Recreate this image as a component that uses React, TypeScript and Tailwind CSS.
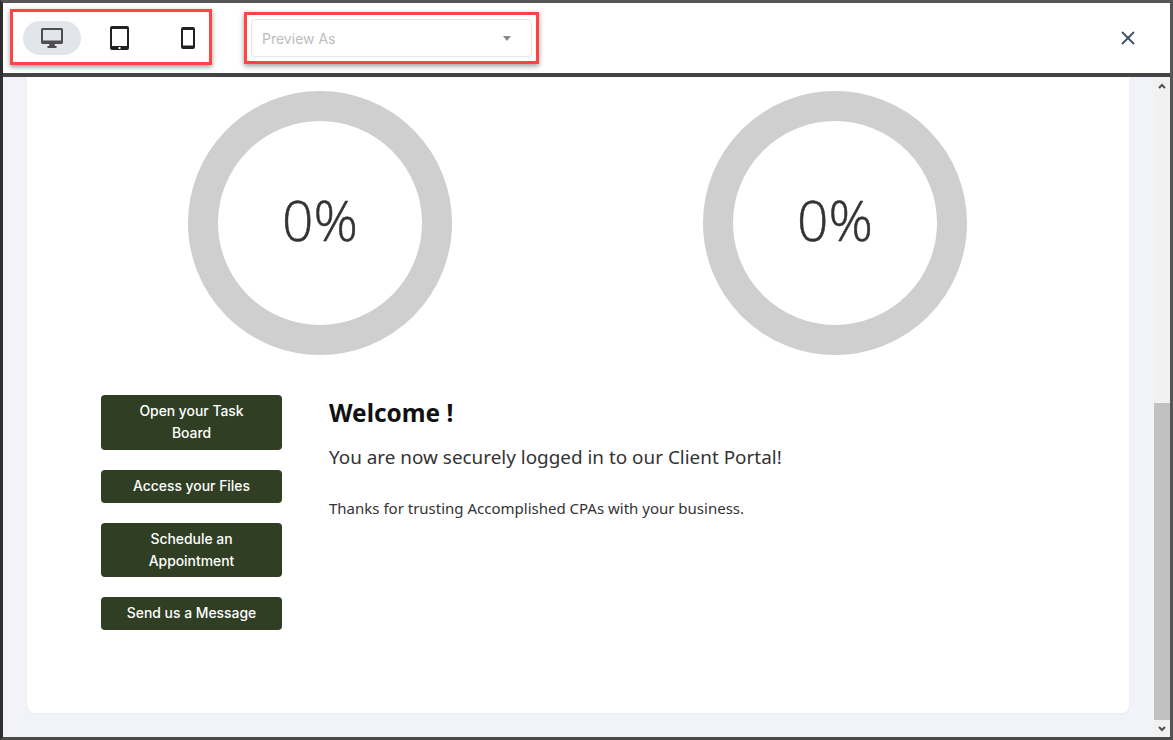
import { X } from 'lucide-react'

const BUTTONS = ['Open your Task Board', 'Access your Files', 'Schedule an Appointment', 'Send us a Message']

function Donut() {
  return (
    <div className="w-[264px] h-[264px] rounded-full border-[30px] border-[#cfcfcf] flex items-center justify-center">
      <span className="text-[55px] leading-none font-light [-webkit-text-stroke:0.5px_#333333] text-[#333333] font-['Open_Sans',sans-serif] -mt-[7px]">0%</span>
    </div>
  )
}

function DesktopIcon() {
  return (
    <svg width="22" height="20" viewBox="0 0 22 20" fill="#4f4f4f">
      <path fillRule="evenodd" d="M1.5 0h19A1.5 1.5 0 0 1 22 1.5v13a1.5 1.5 0 0 1-1.5 1.5h-19A1.5 1.5 0 0 1 0 14.500v-13A1.500 1.500 0 0 1 1.500 0zM2 2v10.500h18V2z" />
      <path d="M8.500 16h5l.5 2h1.500v2h-9v-2H8z" />
    </svg>
  )
}

function TabletIcon() {
  return (
    <svg width="19" height="24" viewBox="0 0 19 24" fill="#222222">
      <path fillRule="evenodd" d="M2 0h15a2 2 0 0 1 2 2v20a2 2 0 0 1-2 2H2a2 2 0 0 1-2-2V2a2 2 0 0 1 2-2zM2 3v17h15V3z" />
      <rect x="8.500" y="21" width="2" height="2" fill="#ffffff" />
    </svg>
  )
}

function PhoneIcon() {
  return (
    <svg width="14" height="22" viewBox="0 0 14 22" fill="#222222">
      <path fillRule="evenodd" d="M2 0h10a2 2 0 0 1 2 2v18a2 2 0 0 1-2 2H2a2 2 0 0 1-2-2V2a2 2 0 0 1 2-2zM2 3v15.500h10V3z" />
    </svg>
  )
}

export default function App() {
  return (
    <div className="w-[1173px] h-[740px] overflow-hidden flex flex-col bg-white border-[3px] border-[#555555] border-l-[#2e2e2e] border-b-[#4a4a4a] font-['Inter',sans-serif]">
      {/* Top bar */}
      <div className="h-[70px] shrink-0 flex items-start bg-white pl-[7px]">
        <div className="mt-[6px] w-[202px] h-[56px] border-[3px] border-[#ff4444] shadow-[0_2px_5px_rgba(0,0,0,0.4)] flex items-center pl-[10px] pt-[2px]">
          <div className="w-[58px] h-[34px] rounded-full bg-[#e2e5e9] flex items-center justify-center">
            <DesktopIcon />
          </div>
          <div className="w-[19px] ml-[29px] flex"><TabletIcon /></div>
          <div className="w-[14px] ml-[52px] flex"><PhoneIcon /></div>
        </div>
        <div className="ml-[32px] mt-[9px] w-[295px] h-[52px] border-[3px] border-[#ff4444] shadow-[0_2px_5px_rgba(0,0,0,0.4)] p-[4px]">
          <div className="h-full border border-[#e4e6ea] rounded-[4px] flex items-center justify-between pl-[10px] pr-[20px]">
            <span className="text-[14px] leading-[20px] pt-[2px] text-[#bdbdbd]">Preview As</span>
            <span className="w-0 h-0 border-x-[4px] border-x-transparent border-t-[5px] border-t-[#888888]" />
          </div>
        </div>
        <div className="ml-auto mr-[31px] mt-[24px] text-[#3f5168]">
          <X size={22} strokeWidth={2} />
        </div>
      </div>
      <div className="h-[4px] shrink-0 bg-[#444444]" />

      {/* Scrolled body */}
      <div className="flex-1 min-h-0 flex bg-[#f2f3f8]">
        <div className="flex-1 min-w-0 pl-[24px] pr-[25px]">
          <div className="h-[636px] bg-white rounded-b-[8px] shadow-[0_1px_3px_rgba(0,0,0,0.04)] pt-[14px]">
            <div className="flex pl-[161px] gap-[251px]">
              <Donut />
              <Donut />
            </div>
            <div className="flex mt-[40px] pl-[74px]">
              <div className="w-[181px] flex flex-col gap-[20px]">
                {BUTTONS.map((label) => (
                  <button
                    key={label}
                    className="w-full px-[20px] pt-[5px] pb-[5.8px] bg-[#303e24] rounded-[4px] text-white text-[13.9px] leading-[22px] font-medium text-center"
                  >
                    {label}
                  </button>
                ))}
              </div>
              <div className="ml-[47px] font-['Noto_Sans',sans-serif] text-[#333333]">
                <h2 className="text-[24.4px] leading-[36px] font-bold text-[#111111]">Welcome !</h2>
                <p className="mt-[12px] text-[18.9px] leading-[28px]">You are now securely logged in to our Client Portal!</p>
                <p className="mt-[26px] text-[15px] leading-[22px]">Thanks for trusting Accomplished CPAs with your business.</p>
              </div>
            </div>
          </div>
        </div>

        {/* Scrollbar */}
        <div className="w-[16px] shrink-0 bg-[#f1f1f1] flex flex-col">
          <div className="h-[17px] flex items-center justify-center">
            <svg width="8" height="6" viewBox="0 0 8 6" fill="none" stroke="#505050" strokeWidth="2"><path d="M1 5l3-3 3 3" /></svg>
          </div>
          <div className="mt-[309px] flex-1 bg-[#c1c1c1]" />
          <div className="h-[17px] flex items-center justify-center">
            <svg width="8" height="6" viewBox="0 0 8 6" fill="none" stroke="#505050" strokeWidth="2"><path d="M1 1l3 3 3-3" /></svg>
          </div>
        </div>
      </div>
    </div>
  )
}
